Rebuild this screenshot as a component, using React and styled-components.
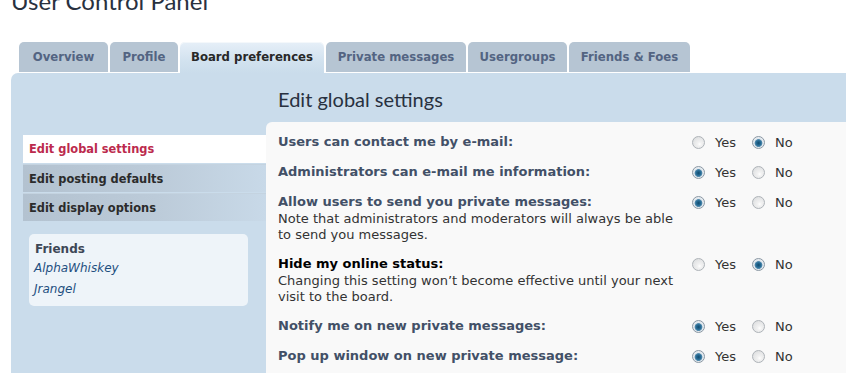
import React from "react";
import styled, { createGlobalStyle } from "styled-components";

const GlobalStyle = createGlobalStyle`
  html, body {
    margin: 0;
    padding: 0;
    background: #ffffff;
    overflow: hidden;
  }
  body {
    font-family: "DejaVu Sans", Verdana, sans-serif;
    font-size: 13px;
    color: #333333;
  }
`;

const Page = styled.div`
  width: 846px;
  height: 373px;
  padding: 1px 0 0 11px;
  box-sizing: border-box;
  overflow: hidden;
`;

const Title = styled.h2`
  margin: -12px 0 0 0;
  font-family: Lato, "Liberation Sans", sans-serif;
  font-weight: 400;
  font-size: 24px;
  line-height: 24px;
  color: #28313f;
`;

const Tabs = styled.ul`
  display: flex;
  gap: 2px;
  list-style: none;
  margin: 29px 0 0 0;
  padding: 0 0 0 8px;
  height: 31px;
  align-items: flex-start;
`;

const Tab = styled.li`
  box-sizing: border-box;
  width: ${(p) => p.$w}px;
  height: ${(p) => (p.$active ? 31 : 30)}px;
  border-radius: 5px 5px 0 0;
  display: flex;
  align-items: center;
  justify-content: center;
  font-weight: bold;
  font-size: 11.7px;
  padding-bottom: 1px;
  color: ${(p) => (p.$active ? "#282828" : "#536482")};
  background: ${(p) =>
    p.$active
      ? "linear-gradient(to bottom, #e6eff8 0%, #d2e2ef 60%, #cadceb 100%)"
      : "#b6c5d3"};
  box-shadow: ${(p) => (p.$active ? "inset 0 1px 0 #f4f8fb" : "none")};
`;

const Panel = styled.div`
  background: #cadceb;
  border-radius: 7px 0 0 0;
  height: 300px;
  display: flex;
  flex-direction: column;
`;

const PanelHead = styled.h3`
  flex-shrink: 0;
  margin: 0;
  height: 49px;
  box-sizing: border-box;
  padding: 14px 0 0 267px;
  font-family: Lato, "Liberation Sans", sans-serif;
  font-weight: 400;
  font-size: 20px;
  line-height: 24px;
  color: #28313f;
`;

const Body = styled.div`
  flex: 1;
  display: grid;
  grid-template-columns: 255px 1fr;
`;

const Side = styled.div`
  padding: 13px 0 0 12px;
`;

const Menu = styled.ul`
  list-style: none;
  margin: 0;
  padding: 0;
`;

const MenuItem = styled.li`
  height: 28px;
  margin-bottom: 1px;
  display: flex;
  align-items: center;
  padding-left: 6px;
  font-weight: bold;
  font-size: 11.4px;
  color: ${(p) => (p.$active ? "#bc2a4d" : "#2b2b2b")};
  background: ${(p) =>
    p.$active
      ? "#ffffff"
      : "linear-gradient(to right, #b3c2d0 0%, #bccbd9 55%, #c8d9e8 100%)"};
  border-top: ${(p) => (p.$active ? "none" : "1px solid #c4d3e0")};
  box-sizing: border-box;
`;

const Friends = styled.div`
  margin: 13px 0 0 6px;
  width: 219px;
  box-sizing: border-box;
  padding: 6px 6px 6px 6px;
  background: #eef4f9;
  border-radius: 5px;
`;

const FriendsTitle = styled.div`
  font-weight: bold;
  font-size: 12px;
  line-height: 18px;
  color: #3d4756;
`;

const FriendLink = styled.div`
  font-style: italic;
  font-size: 12px;
  line-height: 21px;
  color: #1e4f80;
  margin-left: -1px;
`;

const Content = styled.div`
  background: #f9f9f9;
  border-radius: 6px 0 0 0;
  padding: 6px 0 0 12px;
`;

const Row = styled.dl`
  display: flex;
  margin: 0;
  padding: 5px 0 7px 0;
`;

const Term = styled.dt`
  width: 414px;
`;

const Label = styled.div`
  font-weight: bold;
  font-size: 13px;
  line-height: 18px;
  color: ${(p) => (p.$strong ? "#000000" : "#425067")};
`;

const Explain = styled.div`
  font-size: 13px;
  line-height: 16px;
  color: #333333;
  white-space: nowrap;
  &:first-of-type {
    margin-top: 1px;
  }
`;

const Choices = styled.dd`
  margin: 0;
  display: flex;
  align-items: center;
  height: 18px;
`;

const Choice = styled.label`
  display: flex;
  align-items: center;
  font-size: 13px;
  color: #333333;
  margin-right: ${(p) => p.$gap}px;
`;

const Radio = styled.span`
  box-sizing: border-box;
  width: 13px;
  height: 13px;
  border-radius: 50%;
  margin-right: 10px;
  border: 1px solid ${(p) => (p.$on ? "#8a97a3" : "#aeb3b8")};
  background: ${(p) =>
    p.$on
      ? "radial-gradient(circle at 50% 55%, #0f4a6e 0, #2a6f98 2.5px, #5a8fb0 3.6px, #dfe6ec 4.2px, #f6f8f9 100%)"
      : "radial-gradient(circle at 60% 65%, #ffffff 0, #f2f2f2 2px, #d7d9db 100%)"};
`;

const settings = [
  { label: "Users can contact me by e-mail:", yes: false },
  { label: "Administrators can e-mail me information:", yes: true },
  {
    label: "Allow users to send you private messages:",
    explain: [
      "Note that administrators and moderators will always be able",
      "to send you messages.",
    ],
    yes: true,
  },
  {
    label: "Hide my online status:",
    strong: true,
    explain: [
      "Changing this setting won\u2019t become effective until your next",
      "visit to the board.",
    ],
    yes: false,
  },
  { label: "Notify me on new private messages:", yes: true },
  { label: "Pop up window on new private message:", yes: true },
];

const tabs = [
  { name: "Overview", w: 89 },
  { name: "Profile", w: 68 },
  { name: "Board preferences", w: 144, active: true },
  { name: "Private messages", w: 140 },
  { name: "Usergroups", w: 99 },
  { name: "Friends & Foes", w: 121 },
];

const App = () => {
  return (
    <Page>
      <GlobalStyle />
      <Title>User Control Panel</Title>
      <Tabs>
        {tabs.map((t) => (
          <Tab key={t.name} $w={t.w} $active={t.active}>
            {t.name}
          </Tab>
        ))}
      </Tabs>
      <Panel>
        <PanelHead>Edit global settings</PanelHead>
        <Body>
          <Side>
            <Menu>
              <MenuItem $active>Edit global settings</MenuItem>
              <MenuItem>Edit posting defaults</MenuItem>
              <MenuItem>Edit display options</MenuItem>
            </Menu>
            <Friends>
              <FriendsTitle>Friends</FriendsTitle>
              <FriendLink>AlphaWhiskey</FriendLink>
              <FriendLink>Jrangel</FriendLink>
            </Friends>
          </Side>
          <Content>
            {settings.map((s) => (
              <Row key={s.label}>
                <Term>
                  <Label $strong={s.strong}>{s.label}</Label>
                  {s.explain &&
                    s.explain.map((line) => <Explain key={line}>{line}</Explain>)}
                </Term>
                <Choices>
                  <Choice $gap={16}>
                    <Radio $on={s.yes} />
                    Yes
                  </Choice>
                  <Choice $gap={0}>
                    <Radio $on={!s.yes} />
                    No
                  </Choice>
                </Choices>
              </Row>
            ))}
          </Content>
        </Body>
      </Panel>
    </Page>
  );
};

export default App;
